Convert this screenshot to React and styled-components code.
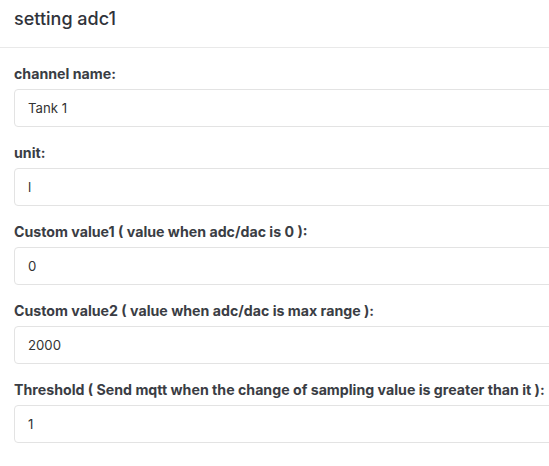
import React from "react";
import styled, { createGlobalStyle } from "styled-components";

const Global = createGlobalStyle`
  html, body { margin: 0; padding: 0; background: #fff; overflow: hidden; }
  body { font-family: Inter, "Noto Sans", "Liberation Sans", sans-serif; color: #333; }
`;

const Dialog = styled.div`
  width: 600px;
  background: #fff;
`;

const Header = styled.div`
  padding: 0 14px;
  display: flex;
  align-items: center;
  border-bottom: 1px solid #e9e9e9;
  box-sizing: border-box;
  height: 48px;
`;

const Title = styled.h3`
  margin: 0 0 10px;
  font-size: 18px;
  font-weight: 500;
  color: #30333a;
`;

const Body = styled.div`
  padding: 17px 0 0 14px;
  display: flex;
  flex-direction: column;
  gap: 17px;
`;

const Field = styled.div`
  display: flex;
  flex-direction: column;
`;

const Label = styled.label`
  font-size: 14.2px;
  font-weight: 700;
  line-height: 18px;
  color: #3a3d44;
  margin-bottom: 6px;
  white-space: nowrap;
`;

const Input = styled.input`
  height: 38px;
  box-sizing: border-box;
  width: 580px;
  border: 1px solid #e3e3e3;
  border-radius: 4px;
  padding: 0 13px;
  font-family: inherit;
  font-size: 13.2px;
  color: #333;
  outline: none;
  background: #fff;
`;

const fields = [
  { label: "channel name:", value: "Tank 1" },
  { label: "unit:", value: "l" },
  { label: "Custom value1 ( value when adc/dac is 0 ):", value: "0" },
  { label: "Custom value2 ( value when adc/dac is max range ):", value: "2000" },
  { label: "Threshold ( Send mqtt when the change of sampling value is greater than it ):", value: "1" },
];

export default function App() {
  return (
    <>
      <Global />
      <Dialog>
        <Header>
          <Title>setting adc1</Title>
        </Header>
        <Body>
          {fields.map((f) => (
            <Field key={f.label}>
              <Label>{f.label}</Label>
              <Input defaultValue={f.value} readOnly />
            </Field>
          ))}
        </Body>
      </Dialog>
    </>
  );
}
